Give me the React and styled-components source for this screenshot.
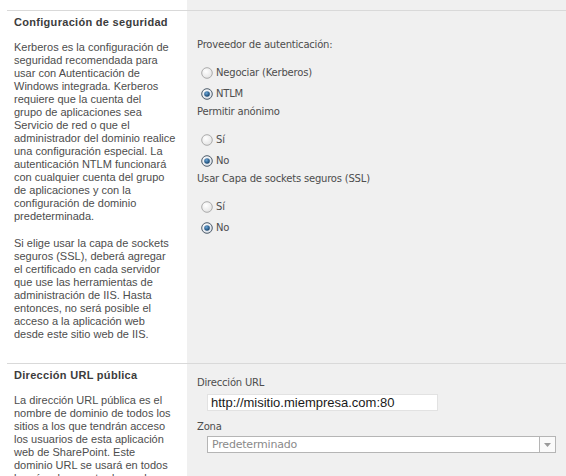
import React from "react";
import styled, { createGlobalStyle } from "styled-components";

const GlobalStyle = createGlobalStyle`
  html, body {
    margin: 0;
    padding: 0;
    background: #ffffff;
  }
  #root {
    height: 476px;
    overflow: hidden;
  }
`;

const Page = styled.div`
  display: flex;
  flex-direction: column;
  min-height: 476px;
  background: linear-gradient(to right, #ffffff 187px, #f0f0f0 187px);
`;

const Stub = styled.div`
  height: 10px;
`;

const Row = styled.section`
  display: grid;
  grid-template-columns: 180px 1fr;
  margin-left: 7px;
  border-top: 1px solid #d9d9d9;
`;

const Info = styled.div`
  padding: 5px 0 22px 7px;
  font: 11px/13px "Liberation Sans", Arial, sans-serif;
  color: #4d4d4d;
`;

const Title = styled.h3`
  margin: 0 0 12px;
  font: bold 11px/13px "Liberation Sans", Arial, sans-serif;
  letter-spacing: 0.3px;
  color: #3c3c3c;
`;

const Para = styled.p`
  margin: 0 0 14px;
  white-space: nowrap;
  &:last-child {
    margin-bottom: 0;
  }
`;

const Fields = styled.div`
  padding: ${(p) => p.$top}px 10px 0 10px;
  font: 10px/14px "DejaVu Sans", Verdana, sans-serif;
  letter-spacing: -0.2px;
  color: #4d4d4d;
`;

const FieldLabel = styled.div`
  line-height: 14px;
`;

const RadioList = styled.div`
  display: flex;
  flex-direction: column;
  padding: 10px 0 0 4px;
`;

const RadioRow = styled.label`
  display: flex;
  align-items: center;
  gap: 3px;
  height: 21.5px;
`;

const Input = styled.div`
  margin: 4px 0 9px 10px;
  width: 231px;
  height: 17px;
  box-sizing: border-box;
  border: 1px solid #e2e2e2;
  background: #ffffff;
  padding-left: 3px;
  font: 13px/15px "Liberation Sans", Arial, sans-serif;
  letter-spacing: 0;
  color: #1a1a1a;
`;

const Select = styled.div`
  display: flex;
  align-items: stretch;
  margin: 2px 0 0 10px;
  width: 349px;
  height: 17px;
  box-sizing: border-box;
  border: 1px solid #b5b5b5;
  background: #ffffff;
`;

const SelectText = styled.span`
  flex: 1;
  padding-left: 4px;
  font: 11px/15px "DejaVu Sans", Verdana, sans-serif;
  letter-spacing: -0.2px;
  color: #8a8a8a;
`;

const SelectButton = styled.span`
  width: 15px;
  display: flex;
  align-items: center;
  justify-content: center;
  border-left: 1px solid #b5b5b5;
  background: #fafafa;
`;

const securityText = [
  [
    "Kerberos es la configuración de",
    "seguridad recomendada para",
    "usar con Autenticación de",
    "Windows integrada. Kerberos",
    "requiere que la cuenta del",
    "grupo de aplicaciones sea",
    "Servicio de red o que el",
    "administrador del dominio realice",
    "una configuración especial. La",
    "autenticación NTLM funcionará",
    "con cualquier cuenta del grupo",
    "de aplicaciones y con la",
    "configuración de dominio",
    "predeterminada.",
  ],
  [
    "Si elige usar la capa de sockets",
    "seguros (SSL), deberá agregar",
    "el certificado en cada servidor",
    "que use las herramientas de",
    "administración de IIS. Hasta",
    "entonces, no será posible el",
    "acceso a la aplicación web",
    "desde este sitio web de IIS.",
  ],
];

const urlText = [
  [
    "La dirección URL pública es el",
    "nombre de dominio de todos los",
    "sitios a los que tendrán acceso",
    "los usuarios de esta aplicación",
    "web de SharePoint. Este",
    "dominio URL se usará en todos",
    "los vínculos mostrados en las",
    "páginas de la aplicación web.",
  ],
];

function Radio({ checked }) {
  return (
    <svg width="12" height="12" viewBox="0 0 12 12">
      <defs>
        <radialGradient id={checked ? "rc" : "ru"} cx="0.4" cy="0.35" r="0.7">
          <stop offset="0" stopColor="#ffffff" />
          <stop offset="1" stopColor={checked ? "#d8dee6" : "#e2e2e2"} />
        </radialGradient>
        <radialGradient id="dot" cx="0.4" cy="0.35" r="0.7">
          <stop offset="0" stopColor="#6aa6d8" />
          <stop offset="1" stopColor="#0d3a63" />
        </radialGradient>
      </defs>
      <circle
        cx="6"
        cy="6"
        r="5.3"
        fill={`url(#${checked ? "rc" : "ru"})`}
        stroke={checked ? "#4f5d6b" : "#ababab"}
        strokeWidth="1"
      />
      {checked && <circle cx="6" cy="6" r="2.8" fill="url(#dot)" />}
    </svg>
  );
}

function RadioGroup({ options, selected }) {
  return (
    <RadioList>
      {options.map((o) => (
        <RadioRow key={o}>
          <Radio checked={o === selected} />
          {o}
        </RadioRow>
      ))}
    </RadioList>
  );
}

function Description({ title, paragraphs }) {
  return (
    <Info>
      <Title>{title}</Title>
      {paragraphs.map((lines, i) => (
        <Para key={i}>
          {lines.map((line, j) => (
            <React.Fragment key={j}>
              {j > 0 && <br />}
              {line}
            </React.Fragment>
          ))}
        </Para>
      ))}
    </Info>
  );
}

export default function App() {
  return (
    <>
      <GlobalStyle />
      <Page>
        <Stub />
        <Row>
          <Description title="Configuración de seguridad" paragraphs={securityText} />
          <Fields $top={27}>
            <FieldLabel>Proveedor de autenticación:</FieldLabel>
            <RadioGroup options={["Negociar (Kerberos)", "NTLM"]} selected="NTLM" />
            <FieldLabel>Permitir anónimo</FieldLabel>
            <RadioGroup options={["Sí", "No"]} selected="No" />
            <FieldLabel>Usar Capa de sockets seguros (SSL)</FieldLabel>
            <RadioGroup options={["Sí", "No"]} selected="No" />
          </Fields>
        </Row>
        <Row>
          <Description title="Dirección URL pública" paragraphs={urlText} />
          <Fields $top={12}>
            <FieldLabel>Dirección URL</FieldLabel>
            <Input>http://misitio.miempresa.com:80</Input>
            <FieldLabel>Zona</FieldLabel>
            <Select>
              <SelectText>Predeterminado</SelectText>
              <SelectButton>
                <svg width="7" height="4" viewBox="0 0 7 4">
                  <path d="M0 0h7L3.5 4z" fill="#9a9a9a" />
                </svg>
              </SelectButton>
            </Select>
          </Fields>
        </Row>
      </Page>
    </>
  );
}
